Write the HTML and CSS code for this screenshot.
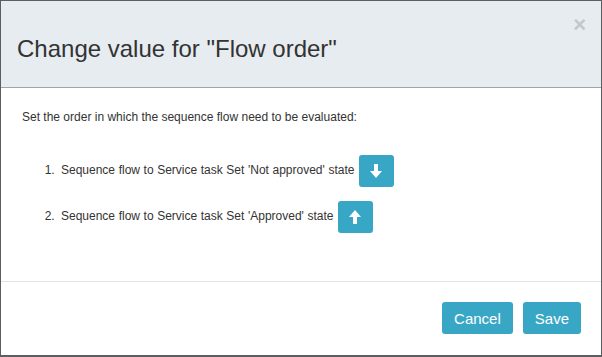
FILE: index.html
```html
<!DOCTYPE html>
<html lang="en">
<head>
    <meta charset="UTF-8">
    <title>Change value for "Flow order"</title>
    <link rel="stylesheet" href="styles.css">
</head>
<body>
    <div class="modal">
        <!-- Header -->
        <div class="modal-header">
            <button class="close" type="button">&times;</button>
            <h2 class="modal-title">Change value for "Flow order"</h2>
        </div>

        <!-- Body -->
        <div class="modal-body">
            <p class="intro">Set the order in which the sequence flow need to be evaluated:</p>
            <ol class="flow-list">
                <li>
                    <span>Sequence flow to Service task Set 'Not approved' state</span>
                    <button class="btn btn-icon" type="button" title="Move down">
                        <svg width="12" height="14" viewBox="0 0 12 14"><path d="M4 0h4v7h4l-6 7-6-7h4z" fill="#fff"/></svg>
                    </button>
                </li>
                <li>
                    <span>Sequence flow to Service task Set 'Approved' state</span>
                    <button class="btn btn-icon" type="button" title="Move up">
                        <svg width="12" height="14" viewBox="0 0 12 14"><path d="M4 14h4V7h4L6 0 0 7h4z" fill="#fff"/></svg>
                    </button>
                </li>
            </ol>
        </div>

        <!-- Footer -->
        <div class="modal-footer">
            <button class="btn" type="button">Cancel</button>
            <button class="btn" type="button">Save</button>
        </div>
    </div>
</body>
</html>
```

FILE: styles.css
```css
body {
    margin: 0;
    padding: 1px;
    background: #5b5f62;
    font-family: "Liberation Sans", Arial, sans-serif;
    color: #333;
}
.modal {
    width: 600px;
    height: 354px;
    background: #fff;
    display: flex;
    flex-direction: column;
}
.modal-header {
    height: 87px;
    background: #e7ecf0;
    border-bottom: 1px solid #9ea4a8;
    box-sizing: border-box;
    padding: 0 13px 0 16px;
    display: flex;
    flex-direction: column;
}
.modal-title {
    margin: 0;
    margin-top: 1px;
    font-size: 24px;
    font-weight: normal;
    line-height: 30px;
    color: #333;
}
.close {
    align-self: flex-end;
    margin: 16px 2px 0 0;
    padding: 0;
    border: 0;
    background: none;
    font-family: "Liberation Sans", Arial, sans-serif;
    font-size: 22px;
    font-weight: bold;
    line-height: 16px;
    color: #c4c7ca;
}
.modal-body {
    flex: 1;
    padding: 22px 20px 0 21px;
    border-bottom: 1px solid #e2e2e2;
    font-size: 12px;
}
.intro {
    margin: 0;
    line-height: 14px;
}
.flow-list {
    margin: 30px 0 0;
    padding-left: 36px;
    display: flex;
    flex-direction: column;
    gap: 13px;
}
.flow-list li {
    line-height: 32px;
}
.flow-list li span {
    padding-left: 3px;
    word-spacing: 0.25px;
}
.btn {
    border: 0;
    border-radius: 3px;
    background: #38a7c6;
    color: #fff;
    font-family: "Liberation Sans", Arial, sans-serif;
    font-size: 15px;
    height: 32px;
    padding: 0 12px;
}
.btn-icon {
    width: 35px;
    height: 32px;
    padding: 0;
    margin-left: 1px;
    vertical-align: middle;
    display: inline-flex;
    align-items: center;
    justify-content: center;
}
.modal-footer {
    height: 73px;
    box-sizing: border-box;
    padding: 20px 20px 0 0;
    display: flex;
    justify-content: flex-end;
    align-items: flex-start;
    gap: 10px;
}
```
